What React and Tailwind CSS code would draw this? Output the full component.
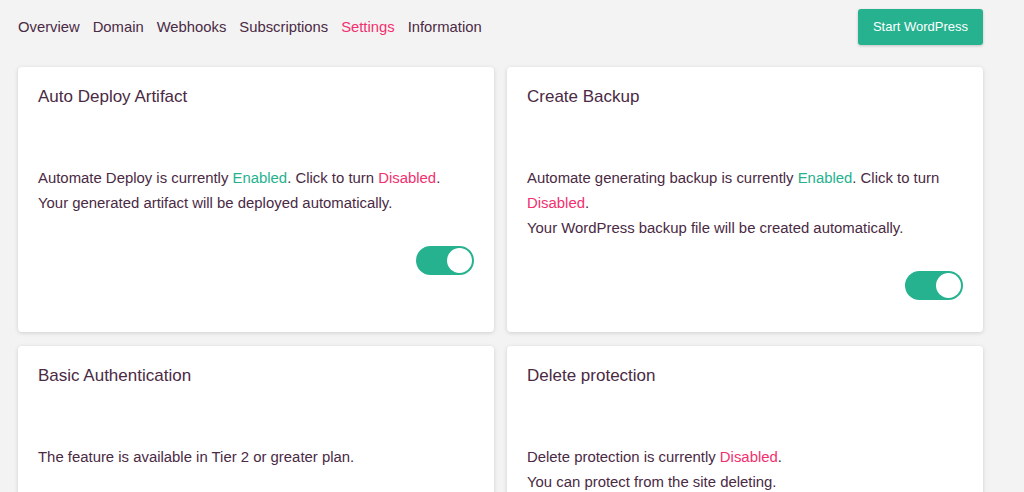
import React, { useState } from "react";

const tabs = ["Overview", "Domain", "Webhooks", "Subscriptions", "Settings", "Information"];

function Toggle({ on, onChange }) {
  return (
    <button
      type="button"
      onClick={onChange}
      className={`relative w-[58px] h-[29px] rounded-full ${on ? "bg-[#26b28f]" : "bg-[#d9d9d9]"}`}
    >
      <span
        className={`absolute top-[2px] w-[25px] h-[25px] rounded-full bg-white ${on ? "right-[2px]" : "left-[2px]"}`}
      />
    </button>
  );
}

function Card({ title, children, toggle }) {
  return (
    <div className="bg-white rounded-[4px] shadow-[0_1px_4px_rgba(0,0,0,0.15)] px-5 pt-[20px] pb-[32px] flex flex-col">
      <h2 className="text-[17px] leading-[20px] text-[#4a2a44]">{title}</h2>
      <div className="mt-[59px] text-[14.9px] leading-[25px] text-[#4a2a44]">{children}</div>
      {toggle}
    </div>
  );
}

export default function App() {
  let [deploy, setDeploy] = useState(true);
  let [backup, setBackup] = useState(true);
  let [protect, setProtect] = useState(false);

  return (
    <div className="min-h-screen bg-[#f3f3f3] pl-[18px] pr-[41px] pt-[9px] font-['Liberation_Sans',Arial,sans-serif]">
      <div className="flex items-center justify-between h-9">
        <nav className="flex gap-[13px] text-[14.8px] text-[#4a2a44] pt-[1px]">
          {tabs.map((t) => (
            <a key={t} href="#" className={t === "Settings" ? "text-[#f2306f]" : ""}>
              {t}
            </a>
          ))}
        </nav>
        <button className="w-[125px] h-9 rounded-[3px] bg-[#26b28f] text-white text-[13px] shadow-[0_1px_3px_rgba(0,0,0,0.2)]">
          Start WordPress
        </button>
      </div>

      <div className="grid grid-cols-2 gap-x-[13px] gap-y-[14px] mt-[22px]">
        <Card
          title="Auto Deploy Artifact"
          toggle={
            <div className="flex justify-end mt-[30px]">
              <Toggle on={deploy} onChange={() => setDeploy(!deploy)} />
            </div>
          }
        >
          <p>
            Automate Deploy is currently <span className="text-[#26b28f]">Enabled</span>. Click to turn{" "}
            <span className="text-[#f2306f]">Disabled</span>.
          </p>
          <p>Your generated artifact will be deployed automatically.</p>
        </Card>
        <Card
          title="Create Backup"
          toggle={
            <div className="flex justify-end mt-[30px]">
              <Toggle on={backup} onChange={() => setBackup(!backup)} />
            </div>
          }
        >
          <p>
            Automate generating backup is currently <span className="text-[#26b28f]">Enabled</span>. Click to turn{" "}
            <span className="text-[#f2306f]">Disabled</span>.
          </p>
          <p>Your WordPress backup file will be created automatically.</p>
        </Card>
        <Card title="Basic Authentication">
          <p>The feature is available in Tier 2 or greater plan.</p>
        </Card>
        <Card
          title="Delete protection"
          toggle={
            <div className="flex justify-end mt-[30px]">
              <Toggle on={protect} onChange={() => setProtect(!protect)} />
            </div>
          }
        >
          <p>
            Delete protection is currently <span className="text-[#f2306f]">Disabled</span>.
          </p>
          <p>You can protect from the site deleting.</p>
        </Card>
      </div>
    </div>
  );
}
